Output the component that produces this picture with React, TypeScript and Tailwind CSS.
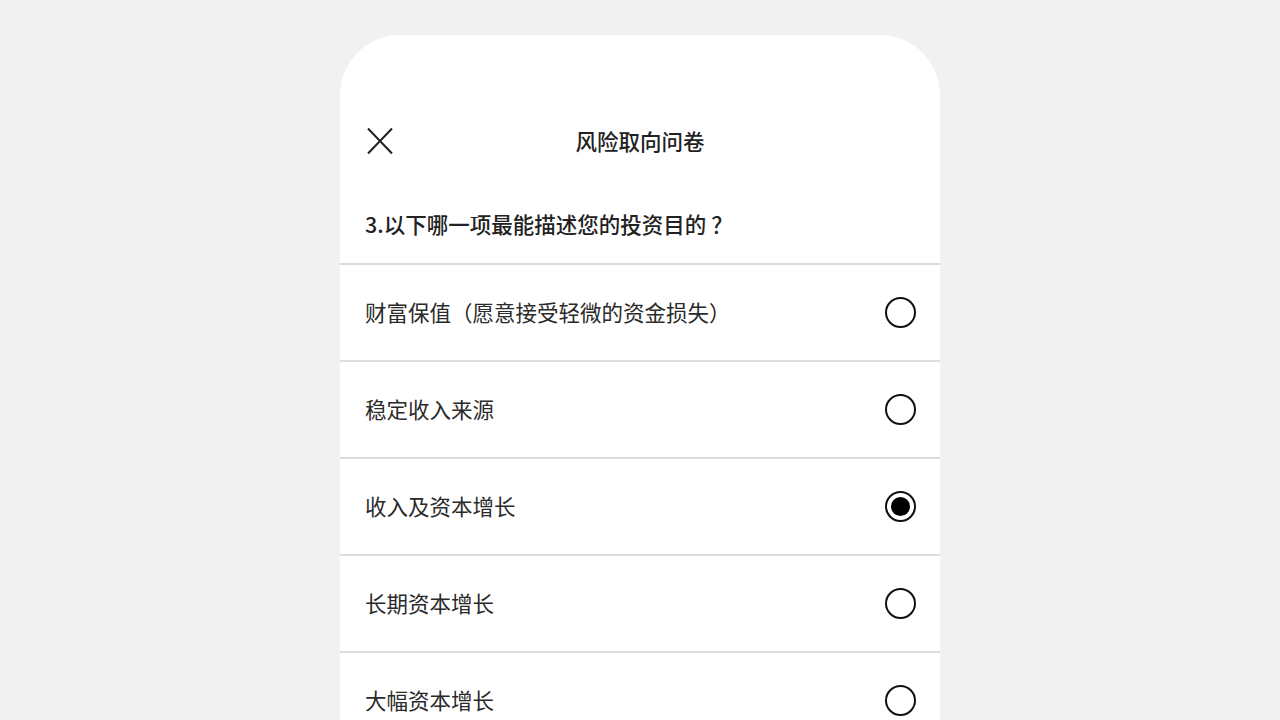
import React, { useState } from 'react';

const options = [
  '财富保值（愿意接受轻微的资金损失）',
  '稳定收入来源',
  '收入及资本增长',
  '长期资本增长',
  '大幅资本增长',
];

const Radio = ({ checked }: { checked: boolean }) => (
  <span className="flex h-[31px] w-[31px] items-center justify-center rounded-full border-2 border-[#111]">
    {checked && <span className="h-[19px] w-[19px] rounded-full bg-black" />}
  </span>
);

const App = () => {
  const [selected, setSelected] = useState(2);

  return (
    <div
      className="flex h-[720px] w-full justify-center overflow-hidden bg-[#f1f1f1] pt-[35px]"
      style={{ fontFamily: '"Noto Sans CJK SC", "Noto Sans", sans-serif' }}
    >
      <div className="w-[600px] shrink-0 rounded-t-[60px] bg-white">
        {/* status bar space */}
        <div className="h-[70px]" />

        {/* header */}
        <div className="relative flex h-[72px] items-center justify-center">
          <button className="absolute left-[26px] top-[22px] text-[#222]">
            <svg width="28" height="28" viewBox="0 0 28 28" fill="none" stroke="currentColor" strokeWidth="2">
              <path d="M2 1.5 L26 26.5 M26 1.5 L2 26.5" />
            </svg>
          </button>
          <h1 className="text-[21.5px] font-medium leading-7 text-[#222]">风险取向问卷</h1>
        </div>

        {/* question */}
        <div className="h-[86px] px-[25px] pt-[33px]">
          <p className="text-[21.5px] font-medium leading-7 text-[#222]">
            3.以下哪一项最能描述您的投资目的<span className="ml-[5px]">？</span>
          </p>
        </div>

        {/* options */}
        <div>
          {options.map((label, i) => (
            <div
              key={label}
              onClick={() => setSelected(i)}
              className="flex h-[97px] cursor-pointer items-center justify-between border-t-2 border-[#dcdcdc] pl-[25px] pr-[24px]"
            >
              <span className="-mt-[2px] text-[21.5px] leading-7 text-[#2a2a2a]">{label}</span>
              <Radio checked={selected === i} />
            </div>
          ))}
        </div>
      </div>
    </div>
  );
};

export default App;
